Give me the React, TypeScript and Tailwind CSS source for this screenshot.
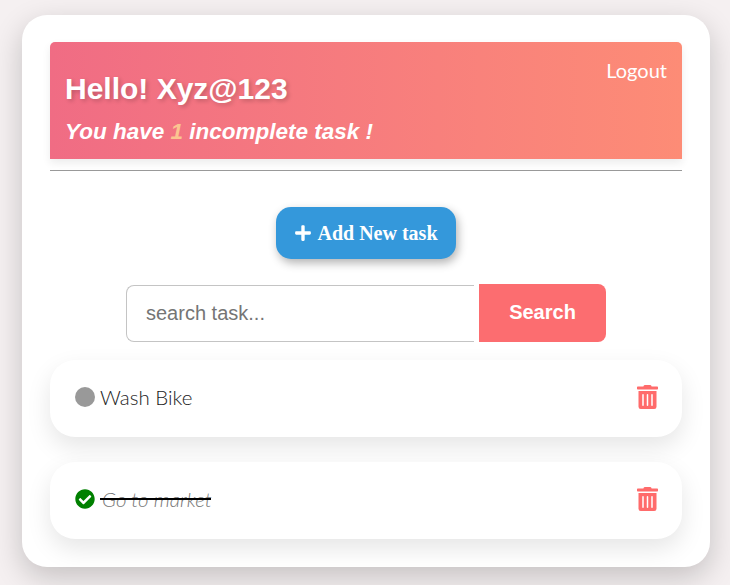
import React from "react";
import { FaPlus, FaCheckCircle, FaTrashAlt } from "react-icons/fa";

interface Task {
  id: number;
  title: string;
  done: boolean;
}

const tasks: Task[] = [
  { id: 1, title: "Wash Bike", done: false },
  { id: 2, title: "Go to market", done: true },
];

const TaskRow: React.FC<{ task: Task }> = ({ task }) => (
  <div className="flex h-[77px] items-center justify-between rounded-[25px] bg-white pb-[3px] pl-[25px] pr-[24px] shadow-[0_10px_25px_rgba(0,0,0,0.1)]">
    <div className="flex items-center gap-[5px]">
      {task.done ? (
        <FaCheckCircle className="h-[20px] w-[20px] text-[#008000]" />
      ) : (
        <span className="h-[20px] w-[20px] rounded-full bg-[#999999]" />
      )}
      {task.done ? (
        <span className="relative ml-[2px] text-[20.5px] font-light italic leading-[26px] text-[#777777]">
          {task.title}
          <span className="absolute -left-[2px] right-[1px] top-[12px] h-[2px] bg-black" />
        </span>
      ) : (
        <span className="text-[20.5px] font-light leading-[26px] text-[#222222]">{task.title}</span>
      )}
    </div>
    <FaTrashAlt className="h-[24px] w-[21px] text-[#ff6b6b]" />
  </div>
);

export default function App() {
  return (
    <div className="h-[585px] overflow-hidden bg-[#f5f0f1] pl-[22px] pr-[20px] pt-[15px] font-['Liberation_Sans',sans-serif]">
      <div className="h-[552px] rounded-[25px] bg-white px-[28px] pt-[27px] shadow-[0_10px_30px_rgba(0,0,0,0.2)]">
        <header className="h-[117px] rounded-t-[5px] bg-gradient-to-r from-[#f06c84] to-[#fd8c76] px-[15px] shadow-[0_4px_8px_rgba(0,0,0,0.08)]">
          <div className="flex items-start justify-between">
            <h1 className="mt-[30px] text-[30px] font-bold leading-[34px] text-white [text-shadow:2px_2px_4px_rgba(0,0,0,0.2)]">
              Hello! Xyz@123
            </h1>
            <span className="mt-[15px] font-['Lato',sans-serif] text-[20px] leading-[26px] text-white">Logout</span>
          </div>
          <p className="mt-[12px] text-[22.5px] font-bold italic leading-[27px] text-white">
            You have <span className="text-[#fbc490]">1</span> incomplete task !
          </p>
        </header>
        <hr className="mt-[11px] border-0 border-t border-[#999999]" />
        <div className="mt-[36px] flex justify-center">
          <button className="flex h-[52px] w-[180px] items-center justify-center gap-[5px] rounded-[15px] bg-[#3498db] font-['Liberation_Serif',serif] text-[20px] font-bold text-white shadow-[2px_4px_10px_rgba(0,0,0,0.3)]">
            <FaPlus className="h-[18px] w-[18px]" />
            Add New task
          </button>
        </div>
        <div className="mt-[25px] flex justify-center">
          <div className="mt-[1px] flex h-[57px] w-[348px] items-center rounded-l-[8px] border border-r-0 border-[#c4c4c4] pb-[2px] pl-[19px] text-[20px] text-[#757575]">
            search task...
          </div>
          <button className="ml-[5px] h-[58px] w-[127px] rounded-r-[8px] bg-[#fc6d70] pb-[2px] text-[20px] font-bold text-white">
            Search
          </button>
        </div>
        <div className="mt-[18px] flex flex-col gap-[25px] font-['Lato',sans-serif]">
          {tasks.map((task) => (
            <TaskRow key={task.id} task={task} />
          ))}
        </div>
      </div>
    </div>
  );
}
